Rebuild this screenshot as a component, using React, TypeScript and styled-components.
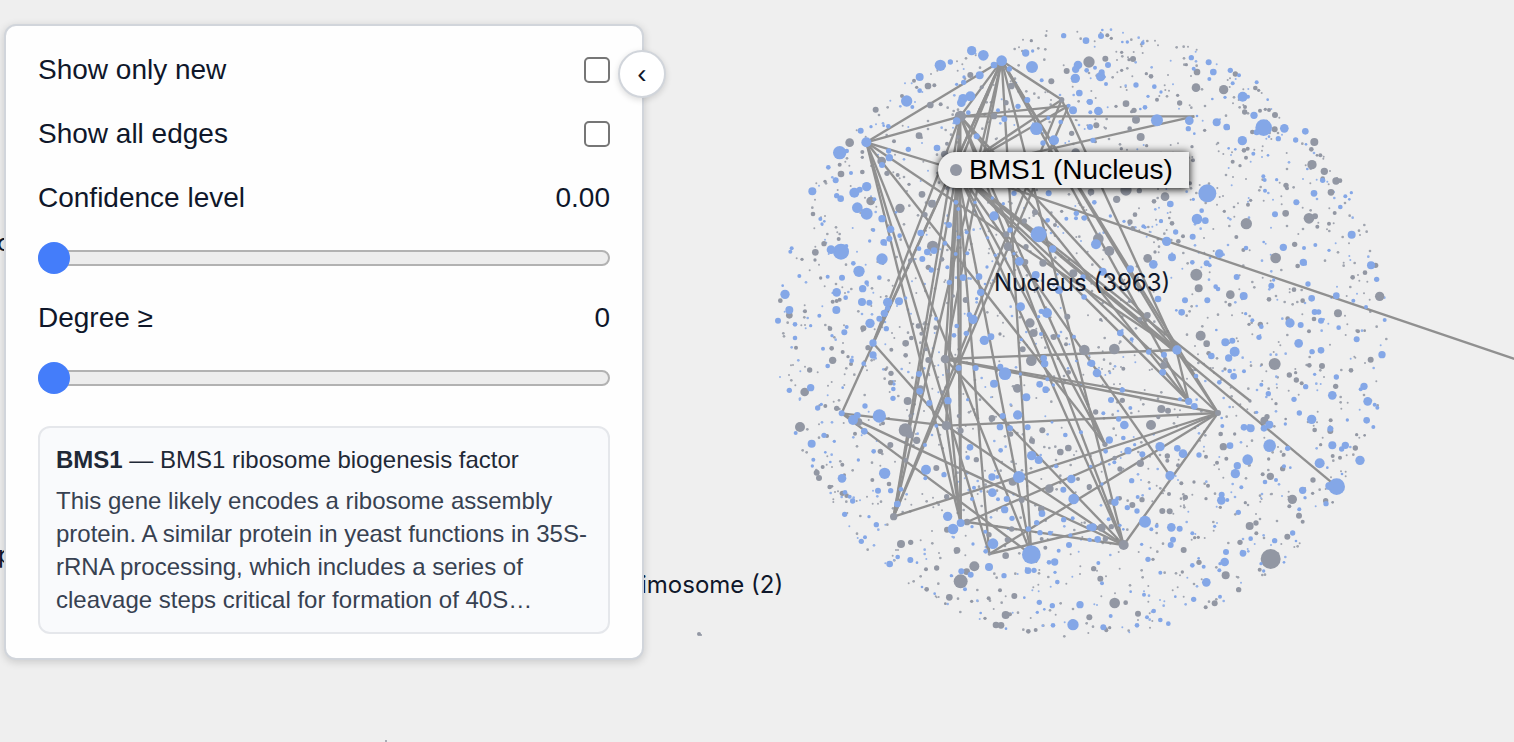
import React, { useId, useState } from "react";
import styled, { createGlobalStyle } from "styled-components";

const GlobalStyle = createGlobalStyle`
  *, *::before, *::after { box-sizing: border-box; }
  body {
    margin: 0;
    background: #efefef;
    color: #0f172a;
    font-family: "Liberation Sans", Arial, sans-serif;
  }
  p { margin: 0; }
`;

/* ---------- graph data ---------- */

// Node coordinates are in graph units: three units to a screen pixel.
// Each sector lists "x,y,radius" triples relative to its own origin.
type Sector = { origin: [number, number]; blue: string; grey: string };

const sectors: Sector[] = [
  {
    origin: [0, 0],
    blue: "605,92,14 640,106,16 511,136,17 541,126,8 449,171,12 410,243,17 427,261,6 695,122,16 672,135,10 718,147,8 767,99,11 788,93,5 786,141,18 881,47,8 924,135,13 917,148,11 916,175,14 928,219,10 909,271,12 896,257,6 815,181,6 772,240,9 744,259,8 629,166,12 601,229,15 579,236,14 574,248,13 595,278,7 560,303,11 581,187,8 560,193,5 582,171,5 449,212,7 355,319,7 341,317,4 303,320,5 272,332,9 289,367,15 209,398,20 230,393,7 175,442,7 197,481,9 127,514,12 290,500,14 253,518,15 269,509,9 200,527,8 212,536,10 262,563,16 290,581,18 336,596,11 243,459,6 356,393,8 358,413,11 336,435,9 415,388,8 501,384,10 620,349,9 703,297,9 684,271,6 799,326,19 852,361,15 819,369,8 835,294,6 872,306,7 732,520,8 836,520,9 672,588,14 667,534,5 558,547,7 565,567,6 833,601,7 889,596,6 919,580,8 918,595,6 943,594,8 151,597,6 163,604,4 156,612,5 313,538,6 378,577,4 700,551,5 615,547,5 958,245,8",
    grey: "890,153,9 844,184,9 784,62,5 601,165,9 474,198,10 493,196,6 432,182,6 440,202,5 396,228,6 481,255,10 512,253,6 317,269,9 239,368,13 372,364,6 447,347,10 335,423,13 351,460,8 383,465,6 209,434,6 213,462,10 277,396,6 277,456,7 277,412,5 165,484,5 129,582,7 302,543,13 390,565,14 456,523,10 417,493,5 486,551,12 465,584,8 571,289,17 672,288,10 708,248,8 724,198,10 635,202,6 875,239,8 905,340,8 524,403,11 531,371,6 795,577,9 763,603,8 917,398,13 875,574,5 564,351,6 532,505,6",
  },
  {
    origin: [930, 0],
    blue: "18,62,10 63,48,9 84,135,9 62,170,14 65,157,9 20,151,7 45,143,6 78,192,6 67,30,4 127,66,4 142,66,5 188,69,6 168,195,8 223,200,7 243,216,5 204,229,5 30,246,9 31,277,6 55,273,13 195,262,7 181,267,4 334,113,8 341,146,6 386,127,9 400,156,10 388,177,6 451,151,8 477,166,6 458,190,6 530,187,6 488,230,15 504,230,6 435,232,5 397,237,4 563,239,4 522,286,11 551,323,25 530,337,9 613,325,13 676,334,10 595,356,8 647,360,8 567,350,4 487,362,14 410,307,12 440,321,10 328,302,13 325,326,8 231,301,18 343,341,4 30,321,9 39,361,8 520,401,6 446,385,4 466,388,4 564,406,4 678,373,4 550,469,6 554,480,6 555,512,6 590,479,5 702,520,10 649,547,9 728,481,8 796,529,6 814,518,5 808,538,4 781,561,7 585,583,9 382,520,27 271,552,10 351,597,16 376,602,10 365,572,7 340,538,5 243,604,6 190,619,6 43,547,7 132,604,5 91,588,5 682,447,4 351,288,4",
    grey: "27,126,17 76,116,9 159,117,9 147,119,5 125,97,5 125,151,5 82,46,6 94,55,5 213,169,7 199,161,5 138,251,10 162,271,8 155,275,5 231,239,6 299,249,8 293,226,5 351,156,10 348,203,13 319,134,5 431,209,14 466,162,8 526,204,7 536,211,5 495,261,6 494,276,8 540,272,6 567,270,6 585,285,9 556,268,5 517,336,7 584,328,9 703,366,12 694,388,7 721,406,6 711,406,4 696,434,14 733,454,11 728,476,7 768,483,11 780,482,7 753,517,10 764,579,6 747,611,6 687,595,16 705,589,9 617,580,10 499,611,17 504,554,6 512,541,5 618,496,8 621,505,6 458,425,6 480,437,5 492,391,7 503,386,6 498,413,6 336,380,5 339,421,6 182,351,12 168,299,12 149,326,7 49,316,9 108,259,5 255,530,13 222,544,7 165,584,7 150,606,8 110,538,11 33,516,10 138,510,17 178,512,8 276,610,7 268,594,4 433,574,5 374,331,5 444,324,6 46,365,5 200,377,5 124,386,5 10,593,6 330,490,6 712,620,6",
  },
  {
    origin: [0, 600],
    blue: "362,28,11 310,30,6 389,47,7 341,67,10 358,56,9 299,63,5 452,39,10 537,15,9 213,95,24 183,89,13 229,78,6 61,95,6 65,85,6 267,154,17 250,130,7 336,117,17 328,173,7 216,173,9 173,170,6 88,168,6 290,188,7 278,206,11 200,217,13 227,233,7 45,223,14 38,197,4 276,246,12 298,248,9 199,270,12 58,270,12 24,302,9 148,287,6 75,313,7 75,354,7 122,317,5 353,247,14 387,244,12 353,265,8 343,280,11 328,296,9 300,310,14 349,326,8 223,337,9 230,321,6 186,347,5 309,369,11 309,405,11 245,422,7 281,431,7 173,438,7 159,386,6 122,503,11 58,511,8 143,564,8 154,553,5 285,558,8 215,580,9 249,600,15 262,586,10 328,588,20 218,503,4 370,507,7 369,535,8 372,492,5 447,462,9 449,514,10 478,549,9 457,117,9 472,96,10 492,92,10 447,86,7 525,70,7 484,150,8 532,142,6 538,187,8 579,173,10 627,170,10 632,217,11 620,236,5 589,340,8 609,298,14 598,284,8 560,318,7 552,346,7 566,444,9 534,542,11 643,361,14 663,350,10 498,296,6 592,100,6 557,102,6 566,52,6 590,37,6 653,53,5 676,106,5 651,141,5 407,234,5 499,617,6 617,444,9 672,491,12 691,440,9 705,461,19 751,462,5 769,532,12 743,585,14 698,588,9 690,621,10 720,625,9 773,622,9 827,509,10 809,493,10 821,415,10 824,431,11 752,260,13 748,124,13 806,43,24 848,87,11 797,165,12 831,279,15 814,274,8 806,290,5 942,231,8 912,350,6 867,210,12 866,348,5 732,101,5 720,30,8 813,342,6 754,359,5 958,431,7 919,423,4 850,495,5 593,539,5 939,171,8 832,478,6 645,192,4 846,607,4",
    grey: "488,79,17 162,71,8 136,97,10 135,120,5 96,118,5 206,57,6 152,174,5 31,242,7 58,286,10 105,274,6 180,326,7 280,325,9 188,245,6 200,243,6 209,239,6 188,421,11 185,385,7 78,383,6 119,450,8 104,516,13 200,565,8 166,558,6 90,621,15 265,606,12 339,610,6 294,383,8 218,396,6 234,410,5 243,432,6 364,389,6 407,370,10 424,354,7 407,406,7 347,448,5 363,460,8 362,488,8 413,543,12 451,509,13 475,420,9 525,417,13 445,318,8 497,323,7 454,341,6 475,142,8 516,118,7 421,122,7 587,240,9 714,80,13 709,43,9 766,126,9 819,129,11 768,80,8 910,160,12 855,15,6 780,309,14 791,339,12 758,388,9 784,422,16 851,351,9 892,290,9 888,373,6 943,390,16 742,505,13 896,457,7 666,595,10 711,463,9 533,454,6 529,617,14 566,588,6 468,388,6 421,588,6 516,516,5 817,631,9 550,228,5 640,362,7 690,342,5",
  },
  {
    origin: [930, 600],
    blue: "260,64,14 287,36,8 338,50,9 815,44,12 610,82,11 498,84,7 672,84,6 706,75,6 418,101,13 276,112,12 220,133,13 337,127,7 380,130,9 389,136,6 670,127,11 873,136,12 890,178,8 48,73,15 151,147,11 68,155,12 470,171,9 574,197,9 684,192,8 407,200,7 414,207,7 491,228,12 382,241,9 315,241,9 234,237,10 13,231,7 305,277,10 289,271,4 695,235,10 769,227,10 820,242,6 858,261,6 914,300,6 704,276,9 716,276,8 630,309,14 662,315,9 723,302,9 776,323,7 830,358,9 906,404,11 517,301,6 544,320,7 537,352,8 436,367,12 457,362,9 464,395,15 446,414,11 394,408,10 461,469,10 449,453,7 492,454,6 656,370,13 696,395,8 723,391,10 769,471,8 852,499,11 842,508,6 863,544,13 884,554,6 892,563,6 860,601,10 880,621,6 757,526,13 695,598,14 751,626,9 802,600,5 658,579,8 565,521,8 544,494,6 642,538,8 677,500,8 121,339,10 155,358,6 206,396,8 252,404,9 291,390,14 35,430,11 51,459,13 248,457,10 348,468,7 127,510,8 93,540,9 70,580,6 151,564,6 116,597,8 133,615,13 326,544,11 343,559,10 418,487,7 492,622,10 512,625,12 568,614,12 552,625,10 530,577,5 427,618,6 409,330,4 497,281,5 243,3,6 195,22,5 581,180,5 551,66,4 747,91,5 704,463,5 616,612,5 300,538,6 425,594,4",
    grey: "55,56,16 88,93,15 203,115,13 158,25,7 309,49,6 295,64,7 469,51,6 644,73,8 587,114,16 349,164,18 356,205,12 451,224,13 449,254,6 642,209,7 653,138,7 818,172,7 855,158,7 887,136,8 899,229,14 668,242,7 774,280,12 567,238,7 702,297,7 623,296,7 687,334,6 541,313,8 507,313,5 362,347,15 380,371,10 386,400,7 584,432,18 688,436,7 726,438,9 628,465,8 649,480,8 665,490,6 647,458,5 767,499,8 872,419,9 813,451,7 834,334,6 854,332,4 202,286,10 180,298,7 103,387,16 149,244,5 251,436,11 256,419,7 127,541,8 244,567,12 264,572,9 213,615,15 235,592,6 414,579,9 435,447,5 47,576,8 510,543,5 588,551,5 553,602,12 561,590,8 752,601,6 289,385,9 130,446,6 62,299,5 225,96,5 490,90,6 545,434,4 617,597,4",
  },
  {
    origin: [0, 1230],
    blue: "283,4,10 125,41,12 162,16,8 77,9,6 130,89,6 127,108,5 193,34,5 216,145,13 265,90,5 344,130,17 311,64,7 324,182,9 362,182,8 225,187,7 239,200,6 248,213,8 224,253,8 319,284,8 274,334,8 285,322,6 383,381,7 421,390,9 359,402,10 468,119,15 466,145,6 465,45,6 522,134,8 382,222,10 393,178,7 533,259,14 549,297,16 572,279,12 600,52,10 593,83,7 692,61,7 666,141,11 682,141,6 667,188,13 612,173,6 606,207,6 684,208,6 710,207,9 704,239,11 747,141,18 785,77,14 806,90,12 816,251,10 800,278,8 775,297,8 726,265,8 810,308,8 840,309,7 669,341,16 647,364,7 784,374,28 774,422,10 792,421,8 837,397,7 854,396,11 897,345,9 911,207,16 880,179,9 904,147,13 881,269,8 908,265,6 958,292,9 886,15,7 933,7,6 858,109,6 866,362,6 901,316,6 574,424,9 602,434,9 585,478,6 657,411,12 702,437,8 544,437,5 632,549,4 808,517,8 847,527,8 862,456,7 802,547,5 763,503,4 930,524,11 849,586,7 909,584,17 855,427,5 708,596,4 456,471,4 494,491,4 297,260,5 958,329,6 606,290,5 609,342,5 646,305,6 441,398,4 166,67,4 181,96,4 823,538,4",
    grey: "406,0,20 420,14,11 440,31,11 361,45,9 331,64,8 217,104,6 158,111,6 140,128,9 147,144,9 179,171,7 217,190,8 230,197,7 186,169,4 223,135,5 307,150,6 357,162,7 499,114,9 530,200,8 371,260,11 393,342,12 422,337,8 561,361,10 531,299,9 591,276,10 500,414,8 468,418,6 613,409,15 590,425,10 572,454,21 538,502,10 470,478,7 526,521,4 605,514,5 645,565,5 656,505,6 690,481,6 733,498,9 707,555,12 720,553,6 678,585,10 693,586,10 775,604,7 797,600,6 707,377,10 728,155,12 755,210,9 838,176,13 814,237,10 871,66,10 895,54,10 786,32,9 722,12,8 657,314,8 712,329,8 725,297,8 619,89,8 572,2,9 826,353,6 908,575,7 255,11,6 815,327,6 924,147,6 407,91,7 171,18,6 957,175,6 658,372,5",
  },
  {
    origin: [930, 1230],
    blue: "88,30,11 77,64,7 130,24,7 144,62,11 187,73,9 240,50,14 164,44,5 103,97,6 292,55,10 309,71,13 357,75,8 270,137,14 155,152,8 105,217,11 112,205,6 142,233,8 171,243,8 195,275,18 173,201,6 214,298,6 230,288,6 274,292,13 299,296,9 279,329,9 272,345,9 185,343,5 38,292,12 53,328,10 30,330,6 86,268,6 337,310,6 204,388,8 404,289,5 55,399,6 66,460,6 241,428,6 192,494,6 152,485,4 221,543,7 201,562,6 171,586,7 241,570,7 265,581,7 92,558,6 70,592,9 337,406,7 371,410,6 341,508,8 379,457,13 420,500,6 434,396,13 438,366,9 489,370,10 418,421,6 420,401,5 512,326,7 543,401,5 551,423,5 584,332,8 638,309,8 648,333,4 424,211,13 425,194,9 442,210,6 475,247,8 466,131,14 472,107,11 484,172,6 503,89,16 450,47,10 569,47,19 623,55,8 612,109,6 555,156,7 588,150,6 719,100,15 757,46,12 796,46,11 785,57,8 840,91,14 770,170,25 748,168,12 668,181,11 675,203,5 738,221,8 658,238,6 742,113,4 631,113,4 32,109,5 120,286,5 130,298,4 209,176,4 356,385,4 286,500,4 66,162,5 612,397,4 786,132,4",
    grey: "131,345,15 93,215,9 119,205,7 157,225,9 186,209,8 247,243,9 269,244,9 65,293,12 94,290,8 76,327,8 28,170,8 120,117,8 181,100,11 262,78,8 262,92,6 294,106,6 104,84,7 267,192,6 316,202,8 304,160,6 342,156,5 384,167,6 378,80,6 411,98,6 439,86,6 430,50,11 422,12,7 464,12,5 548,133,6 571,139,11 608,116,8 611,74,6 566,87,5 699,150,8 737,212,8 698,190,5 758,217,4 826,54,8 780,83,6 758,78,6 722,44,5 751,3,9 637,208,14 628,229,6 657,257,9 668,275,6 622,320,9 572,387,30 509,288,12 528,279,8 529,310,6 480,337,8 496,218,5 437,436,12 476,479,8 404,520,9 377,532,6 357,397,8 311,360,9 307,426,5 41,416,8 61,446,9 104,519,16 137,518,7 174,551,9 28,562,9 79,601,6 89,593,5 219,388,5 539,419,6 344,323,5 355,322,5 378,206,5 421,232,5 75,43,8 830,14,5 854,16,4 704,0,7",
  },
];

type GraphNode = { x: number; y: number; r: number };

const parseNodes = (list: string, [ox, oy]: [number, number]): GraphNode[] =>
  list.split(" ").map((item) => {
    const [x, y, r] = item.split(",").map(Number);
    return { x: x + ox, y: y + oy, r };
  });

const blueNodes = sectors.flatMap((s) => parseNodes(s.blue, s.origin));
const greyNodes = sectors.flatMap((s) => parseNodes(s.grey, s.origin));

// Low-degree nodes are scattered evenly over the compartment disc.
const scatterLeaves = (count: number) => {
  let seed = 3963;
  const next = () => {
    seed = (seed * 1664525 + 1013904223) % 4294967296;
    return seed / 4294967296;
  };
  return Array.from({ length: count }, () => {
    const angle = next() * Math.PI * 2;
    const distance = Math.sqrt(next()) * 916;
    return {
      x: Math.round(934 + Math.cos(angle) * distance),
      y: Math.round(936 + Math.sin(angle) * distance),
      r: next() < 0.55 ? 3 : 4,
      blue: next() < 0.3,
    };
  });
};
const leaves = scatterLeaves(1500);

const hubs: Record<string, [number, number]> = {
  A: [695, 122], B: [875, 239], C: [896, 257], D: [571, 289], E: [289, 367],
  F: [1273, 289], G: [309, 969], H: [215, 1180], I: [525, 1017], J: [529, 1217],
  K: [1219, 990], L: [1256, 1144], M: [1344, 1179], N: [1441, 1143], O: [1700, 1400],
  P: [371, 1490], Q: [572, 1509], R: [591, 1506], S: [658, 1602], T: [784, 1604],
  U: [1061, 1575], V: [1200, 1367], W: [2500, 1107], X: [1005, 1273], Y: [995, 1523],
  Z: [561, 450],
};

const edges = (
  "AE AB AD AG AH AI AP AT AU AK AL AM BZ BP BK CZ CP CD DE DF DQ DP DU DJ DG DK DL DX " +
  "EZ EK EX EQ ES ET FZ GJ HJ HT HU IK IL IM IU IQ JM JU JQ KM KL " +
  "MP MR MS MU RU SY ZA ZD ZI ZJ ZP ZQ ZS ZT ZU ZV ZX ZK ZL ZM ZN ZO ZW"
).split(" ");

/* ---------- styled parts ---------- */

const Stage = styled.main`
  position: relative;
  display: flex;
  align-items: flex-start;
  min-height: 100vh;
  padding: 24px 4px;
  overflow: hidden;
`;

const GraphLayer = styled.div`
  position: absolute;
  inset: 0;
`;

const GraphCanvas = styled.svg`
  display: block;
  width: 100%;
  height: 100%;
`;

const CompartmentLabel = styled.span<{ $x: number; $y: number }>`
  position: absolute;
  left: ${(p) => p.$x}px;
  top: ${(p) => p.$y}px;
  font: 24px/32px Inter, sans-serif;
  white-space: nowrap;
`;

const HoverLabel = styled.div`
  position: absolute;
  left: 938px;
  top: 152px;
  display: flex;
  align-items: center;
  gap: 7px;
  height: 36px;
  padding: 0 16px 0 12px;
  border-radius: 18px 0 0 18px;
  background: #efefef;
  box-shadow: 0 1px 8px #000;
  color: #000;
  font-size: 28px;
  line-height: 36px;
  white-space: nowrap;
`;

const HoverDot = styled.span`
  width: 12px;
  height: 12px;
  border-radius: 50%;
  background: #9297a3;
`;

const Panel = styled.section`
  position: relative;
  width: 640px;
  max-width: calc(100vw - 40px);
  padding: 28px 32px 24px;
  border: 2px solid #d1d5db;
  border-radius: 12px;
  background: #fefefe;
  box-shadow: 0 2px 8px rgba(0, 0, 0, 0.16);
`;

const Controls = styled.div`
  display: grid;
  gap: 32px;
`;

const Row = styled.div`
  display: flex;
  align-items: center;
  justify-content: space-between;
  font-size: 28px;
  line-height: 32px;
`;

const SliderGroup = styled.div`
  display: grid;
  gap: 28px;
  & + & { margin-top: -4px; }
`;

const Checkbox = styled.input`
  appearance: none;
  width: 26px;
  height: 26px;
  margin: 0;
  border: 2px solid #767676;
  border-radius: 5px;
  background: #fff;
  &:checked { background: #447dfa; border-color: #447dfa; }
`;

const Slider = styled.input`
  appearance: none;
  display: block;
  width: 100%;
  height: 32px;
  margin: 0;
  background: transparent;
  &::-webkit-slider-runnable-track {
    height: 16px;
    border: 2px solid #b2b2b2;
    border-radius: 8px;
    background: #ededed;
  }
  &::-webkit-slider-thumb {
    appearance: none;
    width: 32px;
    height: 32px;
    margin: -10px 0 0 -2px;
    border-radius: 50%;
    background: #447dfa;
  }
`;

const GeneCard = styled.article`
  display: grid;
  gap: 8px;
  padding: 15px 16px 16px;
  border: 2px solid #e5e7eb;
  border-radius: 12px;
  background: #f9fafc;
  font-size: 24px;
  line-height: 33px;
`;

const GeneTitle = styled.p`
  color: #1f2937;
`;

const GeneSummary = styled.p`
  color: #374151;
`;

const CollapseButton = styled.button`
  position: absolute;
  top: 24px;
  right: -24px;
  display: grid;
  place-items: center;
  width: 48px;
  height: 48px;
  padding: 0;
  border: 2px solid #d1d5db;
  border-radius: 50%;
  background: #fff;
  box-shadow: 0 2px 6px rgba(0, 0, 0, 0.14);
  color: #0f172a;
  font: 28px/32px "Liberation Sans", Arial, sans-serif;
`;

/* ---------- components ---------- */

const Dots = ({ nodes, fill }: { nodes: GraphNode[]; fill: string }) => (
  <g fill={fill}>
    {nodes.map((n, i) => (
      <circle key={i} cx={n.x} cy={n.y} r={n.r} />
    ))}
  </g>
);

const Graph = () => (
  <GraphCanvas aria-label="Protein interaction graph" role="img">
    <g transform="translate(770 20) scale(0.33333)">
      <g opacity="0.85">
        <Dots nodes={leaves.filter((n) => !n.blue)} fill="#9297a3" />
        <Dots nodes={leaves.filter((n) => n.blue)} fill="#84a7e7" />
      </g>
      <g stroke="#888" strokeWidth="7" opacity="0.92">
        {edges.map((edge) => {
          const [from, to] = [hubs[edge[0]], hubs[edge[1]]];
          return <line key={edge} x1={from[0]} y1={from[1]} x2={to[0]} y2={to[1]} />;
        })}
      </g>
      <Dots nodes={greyNodes} fill="#9297a3" />
      <Dots nodes={blueNodes} fill="#84a7e7" />
    </g>
    <g fill="#9297a3">
      <circle cx="699" cy="634" r="2" />
      <circle cx="701" cy="635" r="1" />
      <circle cx="386" cy="741" r="1" />
    </g>
  </GraphCanvas>
);

const CheckRow = ({ label }: { label: string }) => {
  const id = useId();
  return (
    <Row>
      <label htmlFor={id}>{label}</label>
      <Checkbox id={id} type="checkbox" />
    </Row>
  );
};

const SliderRow = ({ label, max, step, digits }: { label: string; max: number; step: number; digits: number }) => {
  const id = useId();
  const [value, setValue] = useState(0);
  return (
    <SliderGroup>
      <Row>
        <label htmlFor={id}>{label}</label>
        <output htmlFor={id}>{value.toFixed(digits)}</output>
      </Row>
      <Slider
        id={id}
        type="range"
        min={0}
        max={max}
        step={step}
        value={value}
        onChange={(e) => setValue(Number(e.target.value))}
      />
    </SliderGroup>
  );
};

export default function App() {
  return (
    <>
      <GlobalStyle />
      <Stage>
        <GraphLayer>
          <Graph />
          <CompartmentLabel $x={994} $y={267}>Nucleus (3963)</CompartmentLabel>
          <CompartmentLabel $x={641} $y={569}>imosome (2)</CompartmentLabel>
          <CompartmentLabel $x={-3} $y={227}>c</CompartmentLabel>
          <CompartmentLabel $x={-2} $y={539}>p</CompartmentLabel>
          <HoverLabel>
            <HoverDot />
            BMS1 (Nucleus)
          </HoverLabel>
        </GraphLayer>
        <Panel aria-label="Graph filters">
          <Controls>
            <CheckRow label="Show only new" />
            <CheckRow label="Show all edges" />
            <SliderRow label="Confidence level" max={1} step={0.01} digits={2} />
            <SliderRow label="Degree ≥" max={100} step={1} digits={0} />
            <GeneCard>
              <GeneTitle>
                <strong>BMS1</strong> — BMS1 ribosome biogenesis factor
              </GeneTitle>
              <GeneSummary>
                This gene likely encodes a ribosome assembly protein. A similar protein in yeast
                functions in 35S-rRNA processing, which includes a series of cleavage steps critical
                for formation of 40S…
              </GeneSummary>
            </GeneCard>
          </Controls>
          <CollapseButton type="button" aria-label="Collapse panel">‹</CollapseButton>
        </Panel>
      </Stage>
    </>
  );
}
